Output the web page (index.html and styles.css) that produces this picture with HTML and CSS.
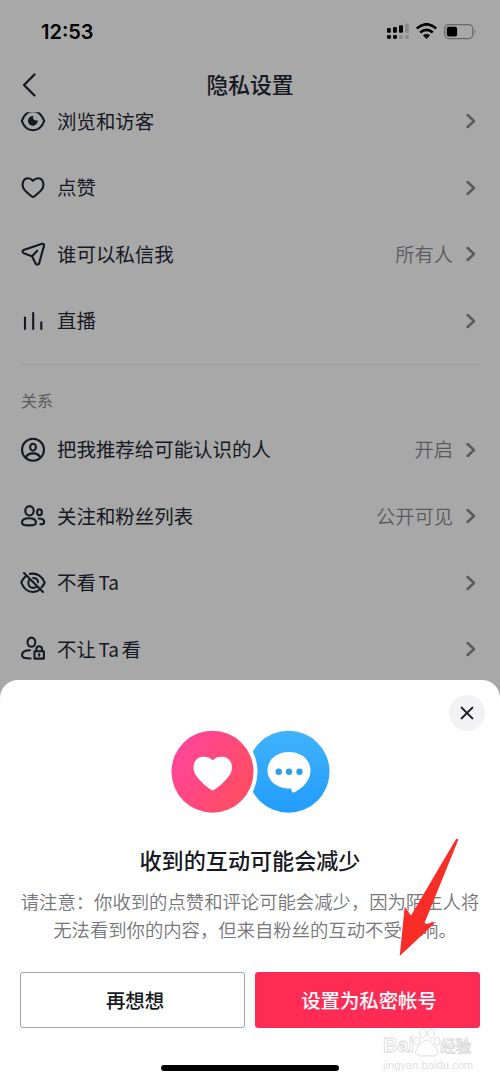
FILE: index.html
```html
<!DOCTYPE html>
<html lang="zh-CN">
<head>
<meta charset="utf-8">
<title>隐私设置</title>
<link rel="stylesheet" href="styles.css">
</head>
<body>
<svg width="0" height="0" class="defs">
  <symbol id="chev" viewBox="0 0 10 16"><path d="M1.600 2 8 8l-6.400 6" fill="none" stroke="#5b5b5c" stroke-width="2.500" stroke-linecap="round" stroke-linejoin="round"/></symbol>
</svg>
<div class="screen">
  <header class="status">
    <span class="time">12:53</span>
    <svg class="status-icons" width="92" height="18" viewBox="0 0 92 18">
      <g fill="#000">
        <rect x="1" y="5" width="3.800" height="4.800" rx="1"/><rect x="7" y="4" width="3.900" height="5.800" rx="1"/><rect x="13" y="2.300" width="4" height="7.500" rx="1"/>
        <rect x="1" y="12" width="4" height="4" rx="1.400"/><rect x="7" y="12" width="4" height="4" rx="1.400"/>
      </g>
      <g fill="#8a8a8a"><rect x="19" y=".6" width="3.800" height="9.200" rx="1"/><circle cx="15" cy="14" r="2"/><circle cx="21" cy="14" r="2"/></g>
      <g fill="none" stroke="#000" stroke-width="2.800"><path d="M30.800 5.500q9.700-8.300 19.400 0"/><path d="M34.200 9.500q6.300-5.300 12.600 0"/></g>
      <path d="M37 12.300q3.500-2.800 7 0L40.500 16z"/>
      <rect x="58.700" y="1.600" width="28" height="14" rx="4" fill="none" stroke="#686868" stroke-width="1.200"/>
      <rect x="60.800" y="3.700" width="10.300" height="9.800" rx="2"/>
      <path d="M88.500 6.300q2 2.300 0 4.600z" fill="#686868"/>
    </svg>
  </header>
  <nav class="nav">
    <svg class="back" width="18" height="26" viewBox="0 0 18 26"><path d="M14.500 2.500 4 13 14.500 23.500" fill="none" stroke="#161823" stroke-width="2.300" stroke-linecap="round" stroke-linejoin="round"/></svg>
    <h1>隐私设置</h1>
  </nav>
  <main class="list">
    <div class="row row-first">
      <svg class="icon" viewBox="0 0 26 26"><path d="M1.800 13C4 7 8 3.300 13 3.300S22 7 24.200 13C22 19 18 22.200 13 22.200S4 19 1.800 13Z"/><path d="M13.300 8a3 3 0 0 0 4.300 3.900 4.900 4.900 0 1 1-4.300-3.900Z" fill="#161823" stroke="none"/></svg>
      <span class="label">浏览和访客</span><svg class="chev"><use href="#chev"/></svg>
    </div>
    <div class="row">
      <svg class="icon" viewBox="0 0 26 26"><path d="M13 22c-1.200 0-8.900-6.500-10-9.700C1.500 7.500 4 3.300 7.800 3.300c2.100 0 3.800.9 5.200 2.500 1.400-1.600 3.100-2.500 5.200-2.500 3.800 0 6.300 4.200 4.800 9C21.900 15.500 14.200 22 13 22Z"/></svg>
      <span class="label">点赞</span><svg class="chev"><use href="#chev"/></svg>
    </div>
    <div class="row">
      <svg class="icon" viewBox="0 0 26 26"><path d="M3.600 9 22 2.800c1.300-.4 2.300.4 2 1.800l-4.800 17.500c-.5 1.800-2.700 2-3.600.4L12 15.200 3.800 12.200c-1.700-.7-1.600-2.600-.2-3.200ZM12 15.200l5.200-5.400"/></svg>
      <span class="label">谁可以私信我</span><span class="value">所有人</span><svg class="chev"><use href="#chev"/></svg>
    </div>
    <div class="row">
      <svg class="icon" viewBox="0 0 26 26"><path d="M5 9.500v11.500M13.200 5v16M21.300 14.300v6.700"/></svg>
      <span class="label">直播</span><svg class="chev"><use href="#chev"/></svg>
    </div>
    <h2 class="section">关系</h2>
    <div class="row">
      <svg class="icon" viewBox="0 0 26 26"><circle cx="13" cy="12.700" r="11"/><ellipse cx="13" cy="10.200" rx="2.900" ry="3.500"/><path d="M5.800 20.700c1-3.100 3.500-4.300 7.200-4.300s6.200 1.200 7.200 4.300"/></svg>
      <span class="label">把我推荐给可能认识的人</span><span class="value">开启</span><svg class="chev"><use href="#chev"/></svg>
    </div>
    <div class="row">
      <svg class="icon" viewBox="0 0 26 26"><ellipse cx="9.500" cy="7.800" rx="4.200" ry="4.700"/><path d="M9 15.300c4.400 0 7 1.300 7 4.200 0 2.200-1.400 2.900-7 2.900s-7-.7-7-2.900c0-2.900 2.600-4.200 7-4.200Z"/><ellipse cx="19.500" cy="9.300" rx="2.400" ry="3"/><path d="M18.700 15.500c4 0 5.500 1.300 5.500 3.500 0 1.500-.9 2.300-3.800 2.300"/></svg>
      <span class="label">关注和粉丝列表</span><span class="value">公开可见</span><svg class="chev"><use href="#chev"/></svg>
    </div>
    <div class="row">
      <svg class="icon" viewBox="0 0 26 26"><path d="M10 3.900C17.500 2.400 22.600 7 24.700 12.500c-.7 1.800-1.800 3.400-3.200 4.900M5.200 6.700C3.500 8.200 2.200 10.200 1.300 12.500 3.500 18.400 8 22 13 22c2 0 4-.6 5.700-1.600M4 3l19 19M8.800 10.500c-1.700 4 .9 7.400 4.300 7.400 1.100 0 2.100-.3 2.900-.9M13.200 8c2.500 0 4.600 1.700 4.900 4.200"/></svg>
      <span class="label">不看<span class="latin">Ta</span></span><svg class="chev"><use href="#chev"/></svg>
    </div>
    <div class="row">
      <svg class="icon" viewBox="0 0 26 26"><ellipse cx="11.400" cy="6.200" rx="3.900" ry="4.600"/><path d="M10 14.300c-4.900 0-8 1.800-8 4.900 0 2.400 1.700 3.300 8.600 3.300M14.500 15.200h9.400v7.400h-9.400zM16.400 15.200v-2.200c0-3.600 5.600-3.600 5.600 0v2.200M19.200 18v1.800"/></svg>
      <span class="label">不让<span class="latin">Ta</span>看</span><svg class="chev"><use href="#chev"/></svg>
    </div>
  </main>

  <section class="sheet">
    <button class="close" aria-label="关闭"><svg width="14" height="14" viewBox="0 0 14 14"><path d="M1.600 1.600l10.800 10.800M12.400 1.600 1.600 12.400" stroke="#161823" stroke-width="2" stroke-linecap="round"/></svg></button>
    <svg class="hero" width="160" height="86" viewBox="0 0 160 86">
      <defs>
        <linearGradient id="pink" x1="0" y1=".2" x2="1" y2=".8"><stop offset=".1" stop-color="#ff4597"/><stop offset=".85" stop-color="#ff4c66"/></linearGradient>
        <linearGradient id="blue" x1="0" y1="0" x2="0" y2="1"><stop stop-color="#41b2fc"/><stop offset="1" stop-color="#229dfc"/></linearGradient>
      </defs>
      <circle cx="118.500" cy="42.700" r="41" fill="url(#blue)"/>
      <circle cx="42.500" cy="42.700" r="45" fill="#fff"/>
      <circle cx="42.500" cy="42.700" r="41" fill="url(#pink)"/>
      <path d="M42.700 61.500c-1.700 0-17.700-12-18.900-20.200C22.300 32.900 27 27.700 33.500 27.700c3.800 0 6.900 1.100 9.200 3.600 2.300-2.500 5.400-3.600 9.200-3.600 6.500 0 11.200 5.200 9.800 13.600-1.300 8.200-17.300 20.200-19 20.200Z" fill="#fff"/>
      <path d="M119 23c12.500 0 21.500 7.800 21.500 18.500 0 9-6.500 16.700-15.500 21.500-1.800 1-2.900.5-3.300-.8l-.5-2.700C107.700 60 97.500 52.300 97.500 41.500 97.500 30.800 106.500 23 119 23Z" fill="#fff"/>
      <g fill="#2e9fe8"><circle cx="108.700" cy="42.700" r="3.200"/><circle cx="119" cy="42.700" r="3.200"/><circle cx="129.500" cy="42.700" r="3.200"/></g>
    </svg>
    <h2 class="title">收到的互动可能会减少</h2>
    <p class="desc">请注意：你收到的点赞和评论可能会减少，因为陌生人将<br><span class="line-end">无法看到你的内容，但来自粉丝的互动不受影响。</span></p>
    <div class="actions">
      <button class="btn">再想想</button>
      <button class="btn primary">设置为私密帐号</button>
    </div>
    <div class="home"></div>
  </section>

  <svg class="arrow" width="62" height="120" viewBox="0 0 62 120"><path d="M.7 118 5.700 68.700 12 77.500 56.800 1.500Q58.500 0 59.200 2L25 86.300 37 84Z" fill="#f92d28"/></svg>

  <div class="watermark">
    <div class="brand"><span>Bai</span>
      <svg width="28" height="30" viewBox="0 0 28 30"><g fill="#fff" stroke="#dedede"><ellipse cx="4" cy="13" rx="3" ry="4"/><ellipse cx="10" cy="5.500" rx="3.200" ry="4.500"/><ellipse cx="18" cy="5.500" rx="3.200" ry="4.500"/><ellipse cx="24" cy="13" rx="3" ry="4"/><path d="M14 12c4 0 5 4 8 7 5 4 3 9-2 9-3 0-9-.5-12 0-6 .5-7-5-3-9 3-3 5-7 9-7Z"/></g><text x="14" y="25.500" text-anchor="middle" class="du">du</text></svg>
      <span class="cn">经验</span></div>
    <div class="url">jingyan.baidu.com</div>
  </div>
</div>
</body>
</html>
```
FILE: styles.css
```css
* { box-sizing: border-box; }
body {
  margin: 0;
  font-family: "Noto Sans CJK SC", sans-serif;
  color: #161823;
}
h1, h2, p { margin: 0; }
button { font-family: inherit; padding: 0; cursor: pointer; }
.defs { position: absolute; }
.screen {
  position: relative;
  width: 500px;
  height: 1082px;
  overflow: hidden;
  background: #a8a8a8;
}
.status {
  display: flex;
  justify-content: space-between;
  align-items: center;
  height: 62px;
  padding: 1px 22px 0 41px;
}
.time {
  font: 600 20px/24px Inter, sans-serif;
  color: #000;
}
.nav {
  display: flex;
  align-items: center;
  height: 50px;
  padding: 0 20px 4px;
}
.nav h1 {
  flex: 1;
  margin-right: 18px;
  padding-bottom: 2px;
  text-align: center;
  font-size: 21.8px;
  font-weight: 500;
  line-height: 32px;
}
.list { padding: 0 20px; }
.row {
  display: flex;
  align-items: center;
  height: 66.5px;
}
.row-first { margin-top: -24px; }
.row-first .icon { clip-path: inset(4px 0 0 0); }
.icon {
  width: 26px;
  height: 26px;
  margin-right: 11px;
  fill: none;
  stroke: #161823;
  stroke-width: 2.1;
  stroke-linecap: round;
  stroke-linejoin: round;
}
.label { flex: 1; padding-bottom: 1.5px; font-size: 19.45px; line-height: 30px; }
.latin { margin: 0 2.5px; font-size: 19px; }
.value {
  padding-bottom: 1.5px;
  font-size: 19.3px;
  line-height: 30px;
  font-weight: 350;
  color: #5b5b5f;
  margin-right: 13px;
}
.chev { width: 10px; height: 16px; margin-right: 4px; }
.section {
  margin-top: 10px;
  height: 52.500px;
  padding: 23px 0 0 1px;
  border-top: 1px solid #9d9d9d;
  font-size: 16px;
  font-weight: 400;
  line-height: 24px;
  color: #5b5b5f;
}
.sheet {
  position: absolute;
  left: 0;
  right: 0;
  bottom: 0;
  height: 402px;
  display: flex;
  flex-direction: column;
  align-items: center;
  padding: 15px 20px 0;
  background: #fff;
  border-radius: 18px 18px 0 0;
}
.close {
  align-self: flex-end;
  display: grid;
  place-items: center;
  width: 36px;
  height: 36px;
  margin-right: -5px;
  border: 0;
  border-radius: 50%;
  background: #f2f2f4;
}
.hero { margin-top: -2px; }
.title {
  margin-top: 28px;
  font-size: 22.1px;
  font-weight: 500;
  line-height: 32px;
}
.desc {
  margin-top: 12px;
  font-size: 18.35px;
  font-weight: 350;
  line-height: 28px;
  color: #75757a;
  text-align: center;
  white-space: nowrap;
}
.line-end { padding-left: 10px; }
.actions {
  display: grid;
  grid-template-columns: 1fr 1fr;
  gap: 10px;
  width: 100%;
  margin-top: 28.500px;
}
.btn {
  height: 56px;
  padding: 0 0 1px 5px;
  border: 1px solid #a2a2a7;
  border-radius: 3px;
  background: #fff;
  color: #161823;
  font-size: 19.4px;
  font-weight: 500;
}
.primary { padding-left: 3px; border-color: #fe2c55; background: #fe2c55; color: #fff; }
.home {
  width: 178px;
  height: 6px;
  margin-top: 37px;
  border-radius: 3px;
  background: #000;
}
.arrow { position: absolute; left: 399px; top: 838px; }
.watermark { position: absolute; left: 383px; top: 1028px; width: 92px; }
.brand {
  display: flex;
  align-items: flex-end;
  height: 30px;
  font: 700 20px/26px "Liberation Sans", sans-serif;
  color: #fff;
  -webkit-text-stroke: .8px #d9d9d9;
}
.brand svg { margin: 0 -1px 0 -1px; flex: none; }
.cn { font: 500 15.500px/26px "Noto Sans CJK SC", sans-serif; white-space: nowrap; }
.du { font: 700 12px "Liberation Sans", sans-serif; fill: #fff; }
.url {
  font: 11.200px/14px "Liberation Sans", sans-serif;
  color: #dfdfdf;
}
```
